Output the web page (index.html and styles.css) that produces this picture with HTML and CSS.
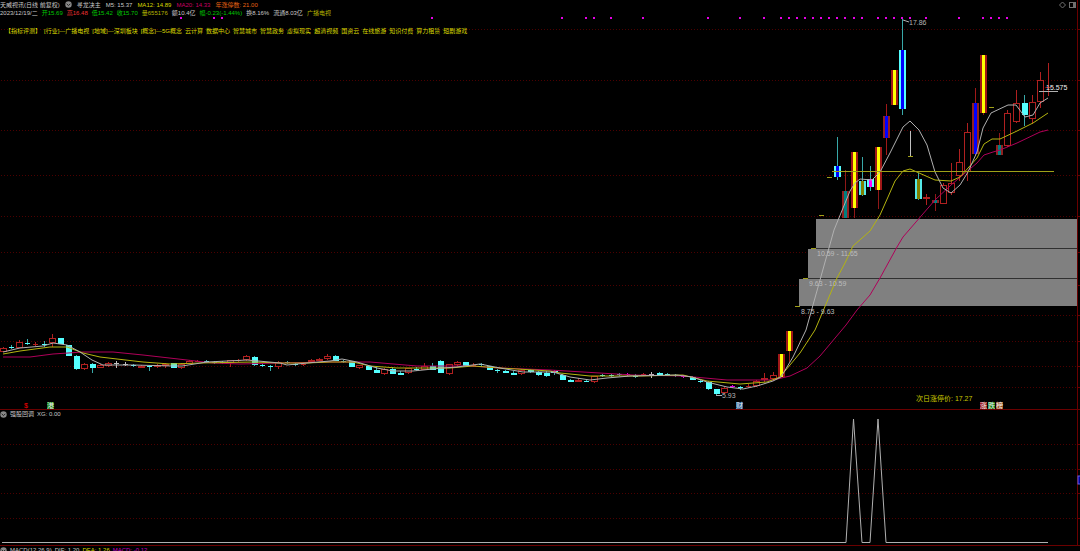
FILE: index.html
```html
<!DOCTYPE html>
<html lang="zh-CN">
<head>
<meta charset="utf-8">
<title>天威视讯 日线</title>
<link rel="stylesheet" href="styles.css">
</head>
<body>
<main class="terminal">
  <section class="panel">
    <header class="overlay">
      <div class="row title">
        <span>天威视讯(日线 前复权)</span>
        <svg class="toggle" viewBox="0 0 7 7"><circle cx="3.5" cy="3.5" r="3.2"/><path d="M1.7 2.8 3.5 4.6 5.3 2.8"/></svg>
        <span>寻龙决主</span>
        <span>M5: 15.37</span>
        <span class="yellow">MA12: 14.89</span>
        <span class="pink">MA20: 14.33</span>
        <span class="orange">年涨停数: 21.00</span>
      </div>
      <div class="row quote">
        <span>2023/12/19/二</span>
        <span class="green">开15.69</span>
        <span class="red">高16.48</span>
        <span class="green">低15.42</span>
        <span class="green">收15.70</span>
        <span class="olive">量655176</span>
        <span>额10.4亿</span>
        <span class="green">幅-0.23(-1.44%)</span>
        <span>换8.16%</span>
        <span>流通8.03亿</span>
        <span class="olive">广播电视</span>
      </div>
      <div class="row topics">
        <span>【指标评测】</span>
        <span>[行业]—广播电视</span>
        <span>[地域]—深圳板块</span>
        <span>[概念]—5G概念</span>
        <span>云计算</span>
        <span>数据中心</span>
        <span>智慧城市</span>
        <span>智慧政务</span>
        <span>虚拟现实</span>
        <span>超清视频</span>
        <span>国资云</span>
        <span>在线旅游</span>
        <span>知识付费</span>
        <span>算力租赁</span>
        <span>短剧游戏</span>
      </div>
    </header>
    <svg class="chart" id="price" viewBox="0 0 1080 410"></svg>
  </section>
  <section class="panel">
    <header class="overlay">
      <div class="row">
        <svg class="toggle" viewBox="0 0 7 7"><circle cx="3.5" cy="3.5" r="3.2"/><path d="M1.7 2.8 3.5 4.6 5.3 2.8"/></svg>
        <span>强股回调</span>
        <span>XG: 0.00</span>
      </div>
    </header>
    <svg class="chart" id="signal" viewBox="0 0 1080 136"></svg>
  </section>
  <section class="panel">
    <div class="row">
      <svg class="toggle" viewBox="0 0 7 7"><circle cx="3.5" cy="3.5" r="3.2"/><path d="M1.7 2.8 3.5 4.6 5.3 2.8"/></svg>
      <span>MACD(12,26,9)</span>
      <span>DIF: 1.20</span>
      <span class="yellow">DEA: 1.26</span>
      <span class="magenta">MACD: -0.12</span>
    </div>
  </section>
</main>
<script src="chart.js"></script>
</body>
</html>
```

FILE: styles.css
```css
* { box-sizing: border-box; }

body {
  margin: 0;
  background: #000;
  color: #c8c8c8;
  font: 7px/8px "Liberation Sans", "Noto Sans CJK SC", sans-serif;
}

.terminal {
  height: 100vh;
  overflow: hidden;
}

.panel { position: relative; }

.overlay {
  position: absolute;
  top: 0;
  left: 0;
}

.row {
  display: flex;
  align-items: center;
  gap: 3px;
  height: 8px;
  white-space: nowrap;
  font-size: 6px;
}

.row.title {
  gap: 5px;
  height: 9px;
}

.row.quote { gap: 4px; }

.row.topics {
  margin: 10px 0 0 5px;
  color: #dcdc00;
}

.toggle {
  width: 7px;
  height: 7px;
  fill: #888;
  stroke: #222;
}

.toggle circle { stroke: none; }
.toggle path { fill: none; }

.yellow { color: #d8d800; }
.olive { color: #b4b400; }
.pink { color: #c80064; }
.orange { color: #e66414; }
.green { color: #00c800; }
.red { color: #f03030; }
.magenta { color: #c800c8; }

.chart {
  display: block;
  width: 100%;
  height: auto;
  fill: none;
}

.chart text { fill: #b4b4b4; }
.chart .text-yellow { fill: #c8c800; }
.chart .text-zone { fill: #bcbcbc; }
.chart .text-red { fill: #ff0000; }
.chart .text-white { fill: #f0f0f0; }

.grid { stroke: #4c0000; stroke-dasharray: 1 2; }
.frame { stroke: #6a0000; }
.zone { fill: #808080; }
.zone-edge { stroke: #303030; }
.level { stroke: #a0a018; }
.line-white { stroke: #b0b0b0; }
.line-yellow { stroke: #b4b410; }
.line-pink { stroke: #b0005a; }
.mark { fill: #e600e6; }
.tool { stroke: #707070; }
.tool-fill { fill: #707070; }
```

FILE: chart.js
```js
const NS = 'http://www.w3.org/2000/svg';
const price = document.getElementById('price');
const signal = document.getElementById('signal');

function add(parent, tag, attrs, text) {
  const node = document.createElementNS(NS, tag);
  for (const key in attrs) node.setAttribute(key, attrs[key]);
  if (text) node.textContent = text;
  parent.appendChild(node);
}
const line = (svg, x1, y1, x2, y2, attrs) => add(svg, 'line', { x1, y1, x2, y2, ...attrs });
const rect = (svg, x, y, width, height, attrs) => add(svg, 'rect', { x, y, width, height, ...attrs });
const label = (svg, x, y, text, cls) => add(svg, 'text', { x, y, class: cls || '' }, text);
const xAt = i => Math.round(3 + 8.1 * i) + 0.5;

function frame(svg, rows, bottom) {
  rows.forEach(y => {
    line(svg, 1, y + 0.5, 1077, y + 0.5, { class: 'grid' });
    line(svg, 1077, y + 0.5, 1080, y + 0.5, { class: 'frame' });
  });
  line(svg, 0, bottom, 1080, bottom, { class: 'frame' });
  line(svg, 1077.5, 0, 1077.5, bottom, { class: 'frame' });
}

frame(price, [29, 80, 130, 175, 216, 252, 285, 315, 341, 366, 387], 409.5);

// Gap zones: left, top, bottom
[[816, 219, 248], [808, 249, 278], [799, 279, 306]].forEach(([x, y, b]) =>
  rect(price, x, y, 1077 - x, b - y, { class: 'zone' }));
line(price, 816, 248.5, 1077, 248.5, { class: 'zone-edge' });
line(price, 808, 278.5, 1077, 278.5, { class: 'zone-edge' });

// Candles: index, kind, high, body top, body bottom, low
const candles = [
[0,'r',347,348,352,352],[1,'c',345,347,348,349],[2,'r',340,342,348,348],[3,'c',339,343,344,345],[4,'r',342,344,345,346],[5,'c',341,344,345,347],[6,'r',334,338,343,347],[7,'c',338,338,344,344],[8,'c',345,345,356,356],[9,'c',355,356,369,370],[10,'r',363,364,369,370],[11,'c',363,364,368,373],[12,'r',364,365,368,368],[13,'r',362,363,366,367],[14,'w',361,363,364,368],[15,'w',362,364,365,366],[16,'c',364,365,366,367],[17,'r',365,366,368,368],[18,'c',365,366,367,371],[19,'r',364,365,367,368],[20,'r',363,364,366,368],[21,'c',363,363,368,368],[22,'r',363,364,368,369],[23,'r',360,361,364,364],[24,'r',360,361,362,362],[25,'c',360,361,362,363],[26,'c',361,362,363,364],[27,'c',361,362,363,364],[28,'r',360,360,363,367],[29,'r',359,360,361,362],[30,'r',355,356,360,361],[31,'c',356,357,365,366],[32,'c',364,365,366,367],[33,'c',365,366,367,371],[34,'r',361,362,367,369],[35,'c',361,362,363,364],[36,'c',363,364,365,366],[37,'r',363,364,365,366],[38,'r',359,360,362,363],[39,'r',358,359,361,361],[40,'r',354,356,359,360],[41,'c',355,356,361,361],[42,'c',360,361,362,363],[43,'c',361,361,367,367],[44,'r',365,365,368,369],[45,'c',365,366,370,370],[46,'c',367,370,373,373],[47,'r',368,369,374,375],[48,'c',367,369,374,374],[49,'c',371,373,375,375],[50,'r',368,368,373,374],[51,'c',367,369,370,371],[52,'r',363,366,370,370],[53,'c',363,366,370,370],[54,'c',360,361,373,373],[55,'r',364,364,374,375],[56,'r',361,362,365,366],[57,'c',362,362,366,366],[58,'r',363,365,366,367],[59,'c',363,364,365,367],[60,'c',366,366,370,370],[61,'c',369,370,371,373],[62,'c',370,371,373,373],[63,'c',371,373,375,375],[64,'r',369,370,374,375],[65,'c',369,370,372,373],[66,'c',371,372,375,376],[67,'c',371,373,376,377],[68,'m',370,371,373,375],[69,'c',374,375,380,380],[70,'c',379,380,382,382],[71,'r',378,380,382,382],[72,'c',380,381,382,382],[73,'r',376,376,382,383],[74,'c',374,375,376,377],[75,'c',374,375,376,377],[76,'c',373,374,375,376],[77,'p',373,374,375,376],[78,'c',374,376,377,378],[79,'r',373,374,375,376],[80,'w',372,374,375,378],[81,'c',372,373,375,376],[82,'c',373,374,375,376],[83,'c',374,375,376,377],[84,'p',375,376,377,378],[85,'c',376,377,380,380],[86,'c',380,381,382,383],[87,'c',381,382,389,390],[88,'c',389,389,394,395],[89,'r',387,388,393,394],[90,'p',385,386,387,388],[91,'c',386,387,388,390],[92,'r',384,386,387,388],[93,'r',380,381,386,387],[94,'r',373,378,380,382],[95,'r',372,375,379,381],
[96,'y',354,354,377,378],[97,'y',331,331,351,362],[98,'d',0,306],[99,'d',0,278],[100,'d',0,248],[101,'d',0,215],[102,'d',0,177],[103,'b',137,166,177,180],[104,'t',170,191,218,218],[105,'y',152,152,208,218],[106,'o',157,181,195,196],[107,'m',166,179,187,191],[108,'y',147,147,190,209],[109,'n',104,116,138,155],[110,'y',70,70,105,105],[111,'b',18,50,109,115],[112,'d',131,156],[113,'o',173,179,199,200],[114,'r',194,197,199,205],[115,'t',194,200,203,211],[116,'r',183,185,204,204],[117,'r',163,183,193,195],[118,'r',149,162,176,181],[119,'r',123,132,172,181],[120,'n',88,103,154,155],[121,'y',55,55,113,115],[122,'d',0,107],[123,'t',133,145,155,155],[124,'r',110,113,146,147],[125,'r',90,103,122,123],[126,'c',95,103,115,126],[127,'r',95,102,119,124],[128,'r',72,80,102,108],[129,'x',63,87,88,96]
];

// Kind: edge colour, core colour
const paint = {
  y: ['#a01818', '#ffff00'], b: ['#54ffff', '#0000ff'], t: ['#902020', '#008080'],
  o: ['#54e8e8', '#808000'], m: ['#54ffff', '#ff00ff'], n: ['#902020', '#0000ff']
};
const wick = { r: '#b02020', c: '#38a8a8', w: '#c0c0c0', p: '#e000e0', y: '#901818', b: '#38a8a8', t: '#901818', o: '#38a8a8', m: '#38a8a8', n: '#a01818', x: '#b02020' };

candles.forEach(([i, kind, high, top, bottom, low]) => {
  const x = xAt(i);
  if (kind === 'd') {
    rect(price, x - 2.5, top, 5, 1, { fill: '#a0a018' });
    if (high) line(price, x, high, x, top, { stroke: '#c0c0c0' });
    return;
  }
  const stroke = wick[kind];
  line(price, x, high, x, top, { stroke });
  line(price, x, bottom, x, low, { stroke });
  const height = bottom - top;
  if (kind === 'x') {
    line(price, x, top, x, bottom, { stroke });
    line(price, x - 3, top + 0.5, x + 3, top + 0.5, { stroke });
  } else if (height < 2) {
    rect(price, x - 2.5, top, 5, height, { fill: kind === 'c' ? '#54ffff' : stroke });
  } else if (kind === 'r') {
    rect(price, x - 3, top + 0.5, 6, height - 1, { stroke, fill: '#000' });
  } else if (kind === 'c') {
    rect(price, x - 2.5, top, 6, height, { fill: '#54ffff' });
  } else {
    rect(price, x - 3.5, top, 7, height, { fill: paint[kind][0] });
    rect(price, x - 1.5, top, 3, height, { fill: paint[kind][1] });
  }
});

// Moving averages
const pinkLine = '3,357 30,357 53,354 83,352 113,352 143,355 187,360 213,363 240,364 280,363 330,362 370,362 417,366 470,366 500,368 550,370 583,372 633,375 683,376 727,380 773,380 790,376 807,368 820,356 846,325 857,310 870,295 880,278 897,247 903,237 922,215 935,200 951,185 977,163 984,155 993,152 1000,150 1017,143 1040,132 1048,130';
const yellowLine = '3,354 20,351 50,347 67,347 83,353 100,357 117,359 143,362 170,364 200,363 253,362 280,363 307,363 330,362 353,362 370,366 397,368 450,368 473,366 500,368 550,371 560,373 590,376 640,376 683,375 707,381 740,384 767,382 780,377 800,353 815,330 818,323 837,278 845,263 853,246 870,231 880,215 888,197 895,181 903,171 910,169 935,180 951,181 960,177 977,158 984,144 992,139 1000,139 1017,131 1033,123 1048,113';
const whiteLine = '3,352 20,348 43,346 53,343 67,345 80,352 92,360 103,365 133,365 173,366 182,366 207,362 247,360 280,363 287,365 307,363 330,361 342,359 357,362 377,368 393,371 413,371 443,368 457,367 480,364 500,368 523,372 553,372 570,377 590,380 607,378 630,376 677,375 692,377 707,382 727,387 743,389 757,386 773,381 781,377 793,357 806,330 820,280 834,230 850,191 855,183 860,179 872,180 880,172 890,153 903,127 910,121 919,130 927,145 935,172 943,188 951,193 960,185 968,172 977,152 983,128 991,113 1008,105 1016,105 1025,117 1033,115 1040,103 1048,98';
add(price, 'polyline', { points: pinkLine, class: 'line-pink' });
add(price, 'polyline', { points: yellowLine, class: 'line-yellow' });
add(price, 'polyline', { points: whiteLine, class: 'line-white' });
line(price, 832, 171.5, 1054, 171.5, { class: 'level' });
line(price, 1039, 91.5, 1058, 91.5, { class: 'line-white' });

[22,26,27,53,69,72,73,75,79,87,91,94,96,97,98,99,100,101,102,103,104,105,106,108,109,110,111,112,114,118,121,122,123,124]
  .forEach(i => rect(price, xAt(i) - 1.5, 17, 2, 2, { class: 'mark' }));

label(price, 817, 256, '10.59 - 11.65', 'text-zone');
label(price, 809, 286, '9.63 - 10.59', 'text-zone');
label(price, 801, 314, '8.75 - 9.63', 'text-zone');
line(price, 903, 20, 909, 22, { class: 'line-white' });
label(price, 909, 25, '17.86');
line(price, 716, 395.5, 722, 395.5, { class: 'line-white' });
label(price, 722, 398, '5.93');
label(price, 1046, 90, '15.575', 'text-white');
label(price, 916, 401, '次日涨停价: 17.27', 'text-yellow');

label(price, 24, 408, '$', 'text-red');
[[47, '#188018', '港'], [736, '#205890', '财'], [980, '#981c1c', '涨'], [988, '#108018', '跌'], [996, '#985020', '榜']]
  .forEach(([x, fill, text]) => {
    rect(price, x, 402, 7, 7, { fill });
    label(price, x, 408, text, 'text-white');
  });

add(price, 'path', { d: 'M1062.5 2 1065.5 5 1062.5 8 1059.5 5Z', class: 'tool' });
rect(price, 1069.5, 2.5, 6, 5, { class: 'tool' });
rect(price, 1073, 2, 3, 6, { class: 'tool-fill' });

frame(signal, [34, 59, 83, 108], 135.5);
add(signal, 'polyline', {
  points: '2,132.5 846,132.5 853.5,9 862,132.5 870,132.5 878,9 886,132.5 1048,132.5',
  class: 'line-white'
});
rect(signal, 1078, 66, 4, 8, { fill: '#0000a0', stroke: '#6060e0' });
```
